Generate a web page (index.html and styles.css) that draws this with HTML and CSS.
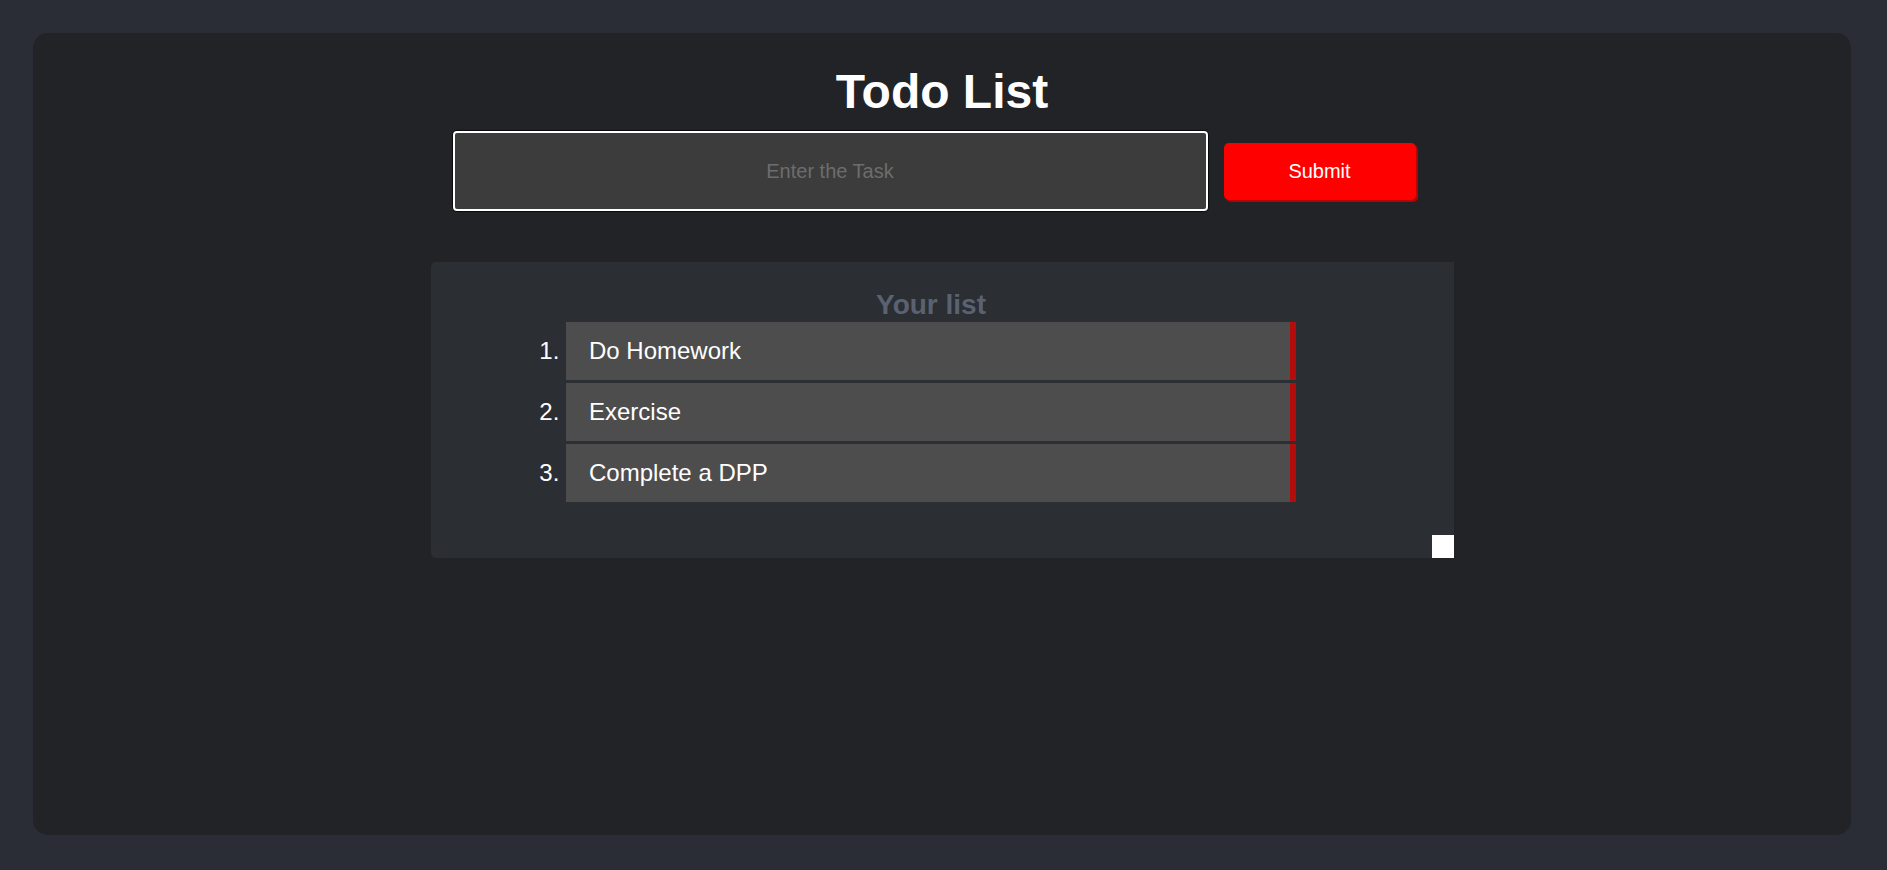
FILE: index.html
```
<!DOCTYPE html>
<html lang="en">
<head>
<meta charset="utf-8">
<title>Todo List</title>
<link rel="stylesheet" href="styles.css">
</head>
<body>
  <main class="app">
    <h1 class="title">Todo List</h1>
    <form class="entry">
      <input class="task-input" type="text" placeholder="Enter the Task">
      <button class="submit" type="button">Submit</button>
    </form>
    <section class="panel">
      <div class="panel-body">
        <h2 class="list-title">Your list</h2>
        <ol class="tasks">
          <li class="task">Do Homework</li>
          <li class="task">Exercise</li>
          <li class="task">Complete a DPP</li>
        </ol>
      </div>
      <div class="panel-side"><span class="corner"></span></div>
    </section>
  </main>
</body>
</html>
```
FILE: styles.css
```
html, body {
  margin: 0;
  height: 100%;
}
body {
  background: #2a2d35;
  padding: 33px 36px 35px 33px;
  box-sizing: border-box;
  font-family: "Liberation Sans", Arial, sans-serif;
  display: flex;
}
.app {
  flex: 1;
  background: #212327;
  border-radius: 15px;
  padding-top: 31px;
  display: flex;
  flex-direction: column;
  align-items: stretch;
}
.title {
  margin: 0;
  color: #ffffff;
  font-size: 48px;
  line-height: 55px;
  font-weight: bold;
  text-align: center;
}
.entry {
  margin: 12px 0 0 0;
  display: flex;
  justify-content: center;
  align-items: center;
}
.task-input {
  width: 755px;
  height: 80px;
  box-sizing: border-box;
  border: 2px solid #ffffff;
  border-radius: 4px;
  background: #3c3c3c;
  box-shadow: 0 0 1px 1px rgba(0, 0, 0, 0.7);
  color: #ffffff;
  font-family: "Liberation Sans", Arial, sans-serif;
  font-size: 20px;
  text-align: center;
  outline: none;
  padding: 0 10px;
}
.task-input::placeholder {
  color: #6d6d6d;
}
.submit {
  width: 192px;
  height: 57px;
  margin: 0 16px;
  border: none;
  border-radius: 5px;
  background: #ff0000;
  box-shadow: 2px 2px 0 #b80000;
  color: #ffffff;
  font-family: "Liberation Sans", Arial, sans-serif;
  font-size: 20px;
  padding: 0;
}
.panel {
  width: 1023px;
  margin: 51px auto 0 auto;
  background: #2b2e33;
  border-radius: 5px 0 0 5px;
  display: flex;
}
.panel-body {
  flex: 1;
  padding: 27px 0 56px 0;
  display: flex;
  flex-direction: column;
  align-items: center;
}
.list-title {
  margin: 0 0 1px 0;
  width: 730px;
  text-align: center;
  color: #5a6272;
  font-size: 28px;
  line-height: 32px;
  font-weight: bold;
}
.tasks {
  margin: 0;
  padding: 0;
  width: 730px;
  list-style: decimal outside;
}
.task {
  box-sizing: border-box;
  background: #4d4d4d;
  border-right: 6px solid #b30c0c;
  color: #ffffff;
  font-size: 24px;
  line-height: 28px;
  padding: 15px 20px 15px 23px;
}
.task + .task {
  margin-top: 3px;
}
.task::marker {
  color: #ffffff;
}
.panel-side {
  width: 22px;
  display: flex;
  align-items: flex-end;
}
.corner {
  display: block;
  width: 22px;
  height: 23px;
  background: #ffffff;
}
```
